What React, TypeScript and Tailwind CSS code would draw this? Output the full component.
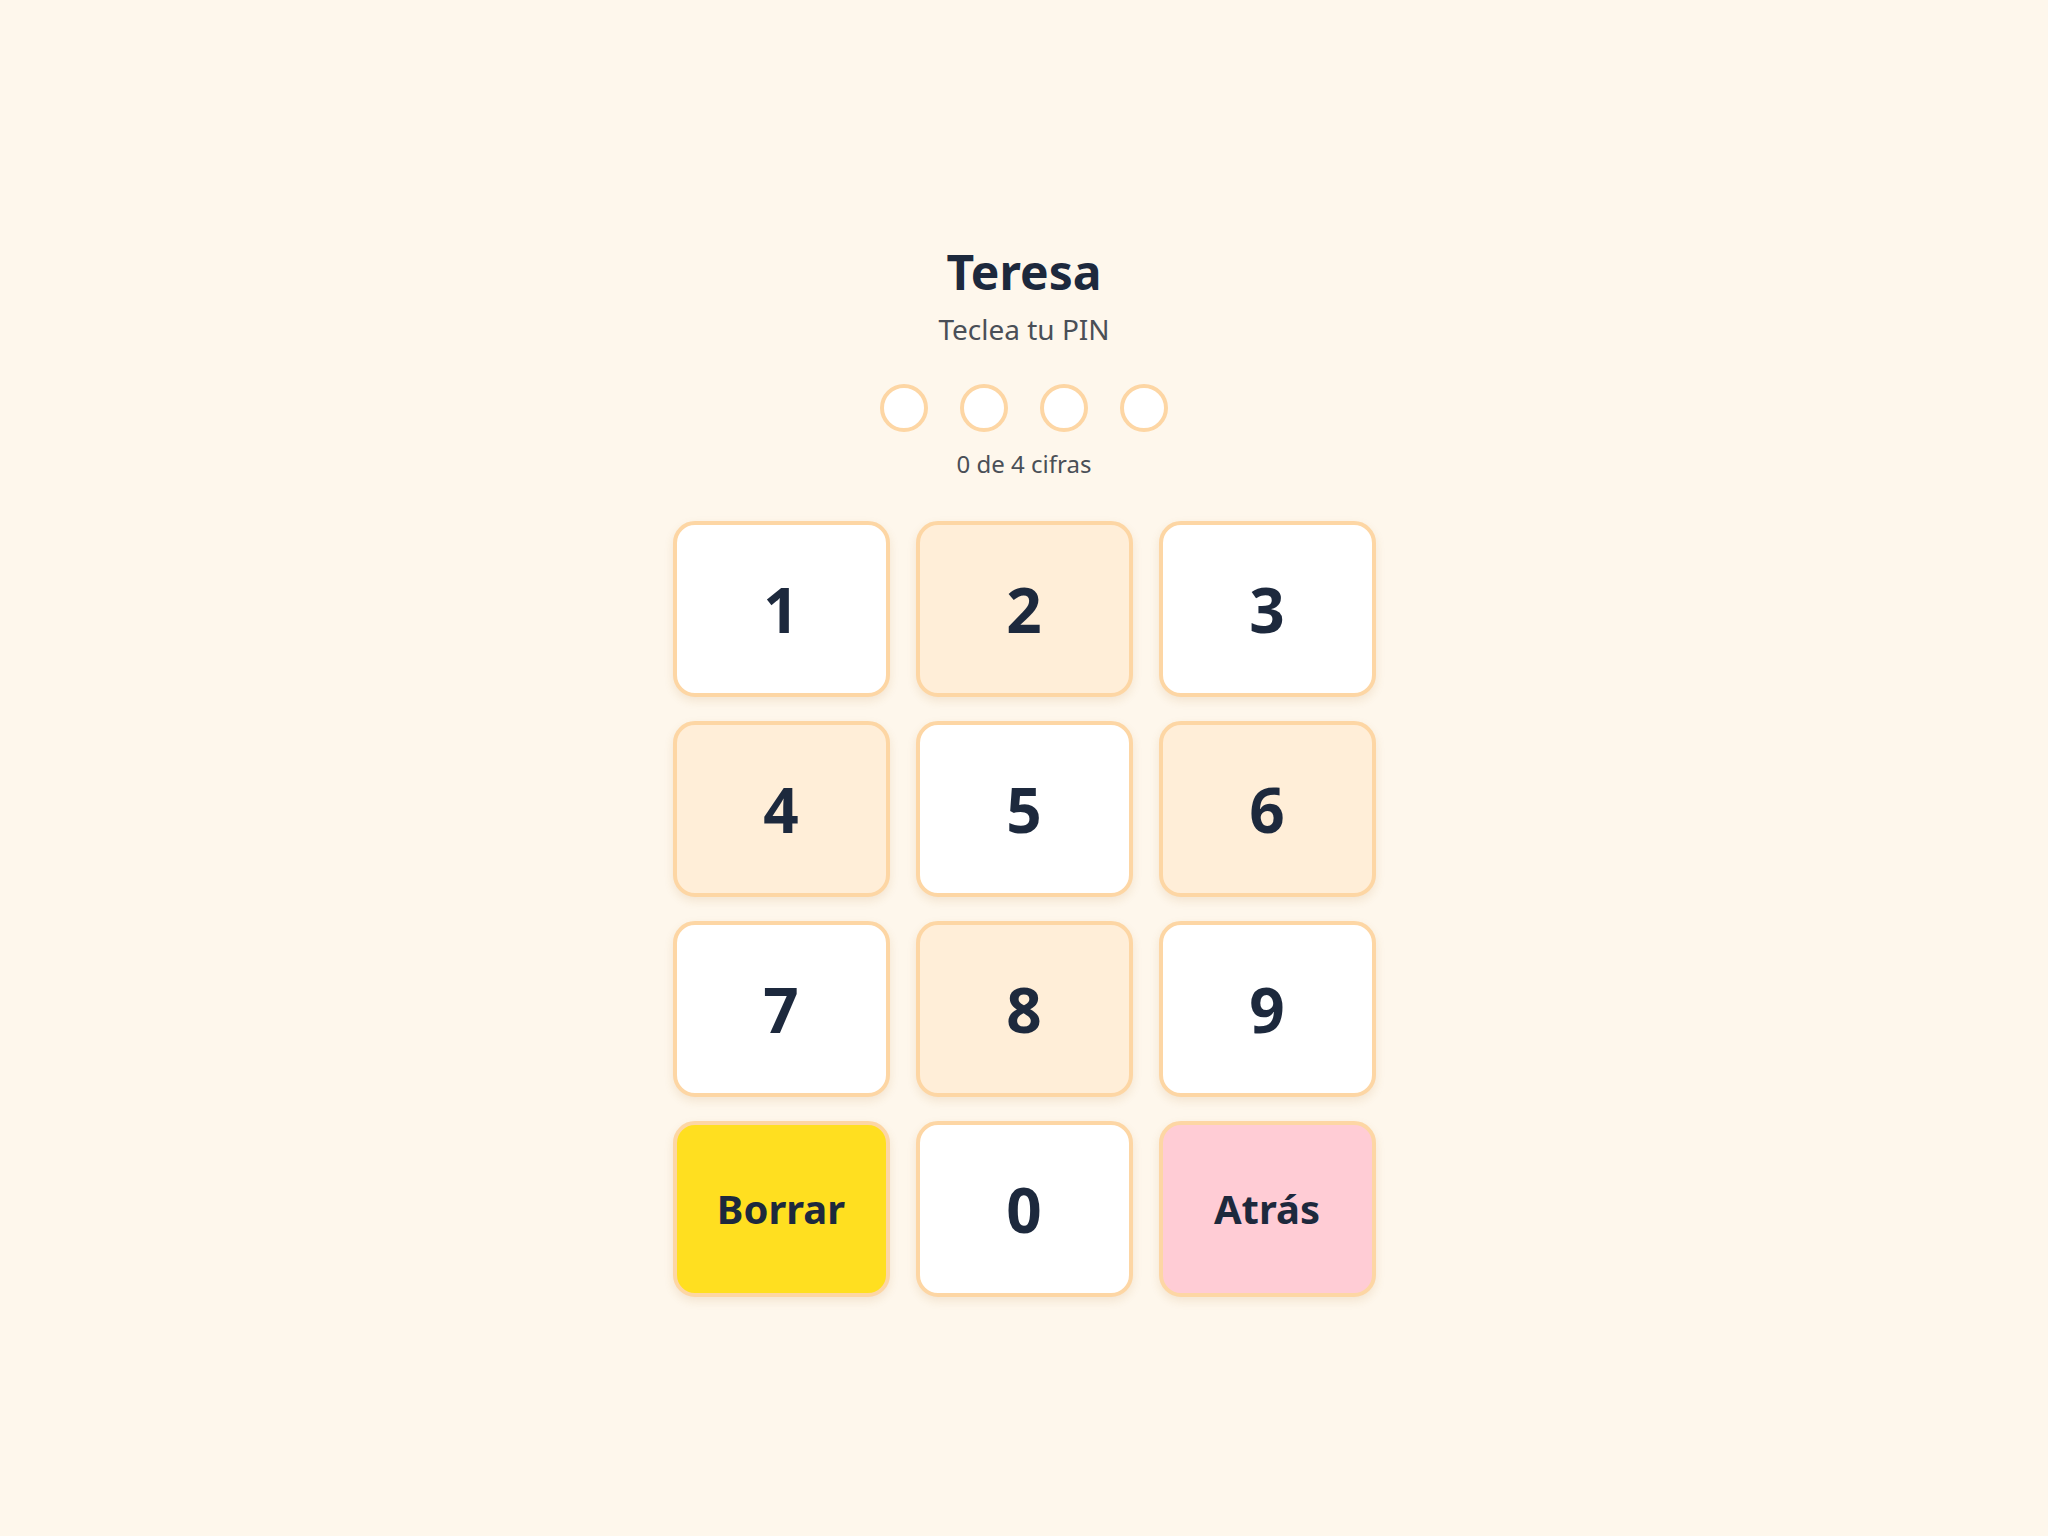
import { useState } from "react";

type Key = {
  label: string;
  tone: "white" | "peach" | "yellow" | "pink";
  small?: boolean;
};

const keys: Key[] = [
  { label: "1", tone: "white" },
  { label: "2", tone: "peach" },
  { label: "3", tone: "white" },
  { label: "4", tone: "peach" },
  { label: "5", tone: "white" },
  { label: "6", tone: "peach" },
  { label: "7", tone: "white" },
  { label: "8", tone: "peach" },
  { label: "9", tone: "white" },
  { label: "Borrar", tone: "yellow", small: true },
  { label: "0", tone: "white" },
  { label: "Atrás", tone: "pink", small: true },
];

const toneClass: Record<Key["tone"], string> = {
  white: "bg-white",
  peach: "bg-[#ffeed8]",
  yellow: "bg-[#ffdf20]",
  pink: "bg-[#ffccd5]",
};

export default function App() {
  const [pin, setPin] = useState("");

  const press = (label: string) => {
    if (label === "Borrar") return setPin("");
    if (label === "Atrás") return setPin((p) => p.slice(0, -1));
    setPin((p) => (p.length < 4 ? p + label : p));
  };

  return (
    <div className="flex min-h-screen flex-col items-center justify-center bg-[#fef7ec] pt-1 font-['Noto_Sans',sans-serif] text-[#1d293d]">
      <h1 className="text-[48px] font-bold leading-[1.2]">Teresa</h1>
      <p className="mt-[10px] text-[28px] leading-[1.3] text-[#4a4f57]">Teclea tu PIN</p>

      <div className="mt-[37px] flex gap-8">
        {[0, 1, 2, 3].map((i) => (
          <div
            key={i}
            className={`h-12 w-12 rounded-full border-4 border-[#fdd6a4] ${i < pin.length ? "bg-[#fdd6a4]" : "bg-white"}`}
          />
        ))}
      </div>
      <p className="mt-4 text-[24px] leading-[1.3] text-[#4a4f57]">{pin.length} de 4 cifras</p>

      <div className="mt-[42px] grid grid-cols-[repeat(3,217px)] gap-x-[26px] gap-y-6">
        {keys.map((k) => (
          <button
            key={k.label}
            type="button"
            onClick={() => press(k.label)}
            className={`flex h-[176px] items-center justify-center rounded-[22px] border-4 border-[#fdd6a4] font-bold shadow-[0_4px_10px_rgba(180,120,40,0.14)] ${toneClass[k.tone]} ${k.small ? "text-[40px]" : "text-[62px]"}`}
          >
            {k.label}
          </button>
        ))}
      </div>
    </div>
  );
}
